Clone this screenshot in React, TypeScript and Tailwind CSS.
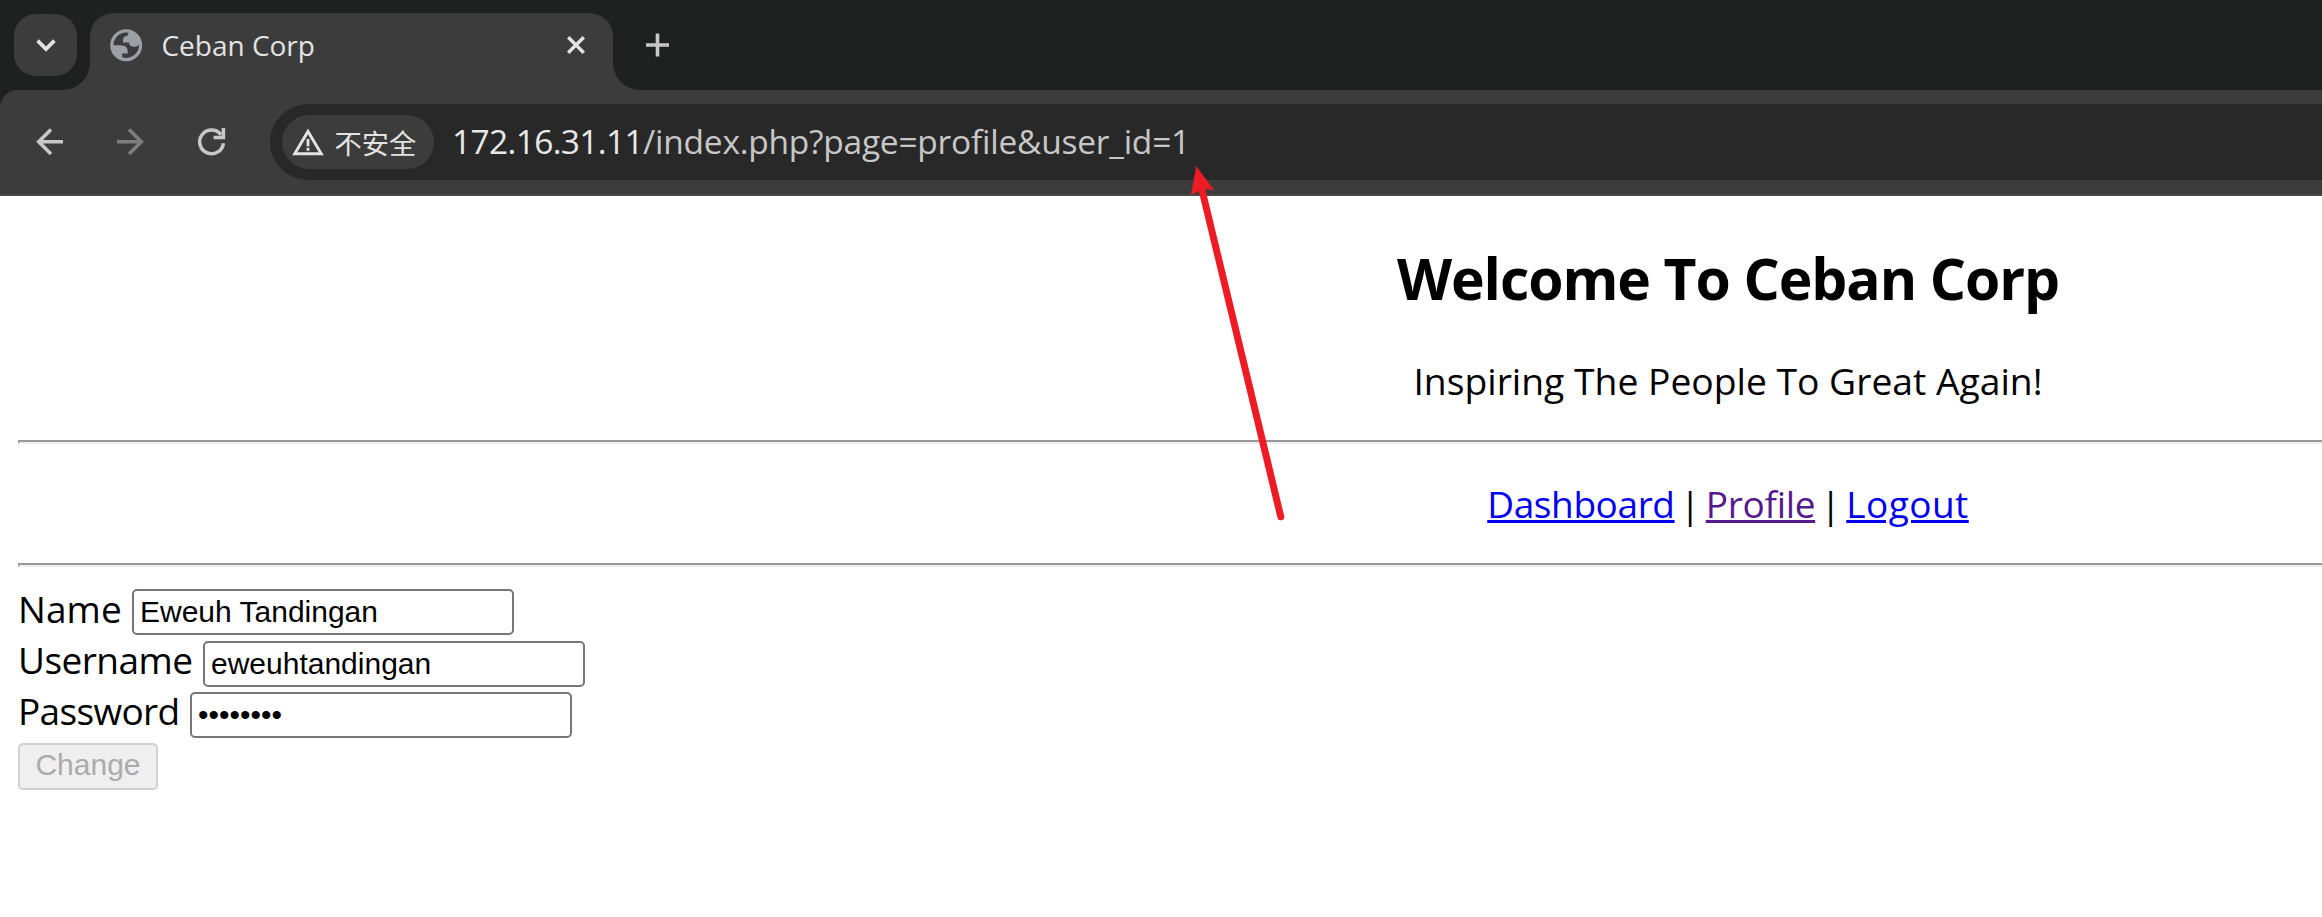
import React from "react";

function TabStrip() {
  return (
    <div className="flex h-[90px] items-start bg-[#1f2120]">
      <button className="ml-[14px] mt-[14px] flex h-[62px] w-[63px] shrink-0 items-center justify-center rounded-[22px] bg-[#3c3c3c]">
        <svg className="h-[20px] w-[24px]" viewBox="0 0 24 20" fill="none">
          <path d="M3.6 5.6 12 14l8.4-8.4" stroke="#e3e3e3" strokeWidth="3.8" />
        </svg>
      </button>
      <svg className="ml-[-14px] mt-[63px] h-[27px] w-[27px] shrink-0" viewBox="0 0 27 27">
        <path d="M27 0v27H0A27 27 0 0 0 27 0z" fill="#3c3c3c" />
      </svg>
      <div className="mt-[13px] flex h-[77px] w-[523px] shrink-0 items-start rounded-t-[23px] border-t border-[#353736] bg-[#3c3c3c]">
        <svg className="ml-[16.5px] mt-[11.8px] h-[38.4px] w-[38.4px] shrink-0" viewBox="0 0 24 24">
          <path
            fill="#9aa0a6"
            fillRule="evenodd"
            d="M12 2c5.523 0 10 4.477 10 10s-4.477 10-10 10S2 17.523 2 12 6.477 2 12 2zM4 12h4.4c3.407.022 4.922 1.73 4.543 5.127H9.488v2.47a8.004 8.004 0 0 0 10.498-8.083C19.327 12.504 18.332 13 17 13c-2.137 0-3.206-.916-3.206-2.75h-3.748c-.274-2.728.683-4.092 2.87-4.092 0-.975.327-1.597.811-1.97A8.004 8.004 0 0 0 4 12z"
          />
        </svg>
        <span className="ml-[16.5px] mt-[11px] whitespace-nowrap text-[28px] leading-[40px] text-[#e3e3e3]">
          Ceban Corp
        </span>
        <svg className="ml-auto mr-[27px] mt-[21px] h-[20px] w-[20px]" viewBox="0 0 20 20" fill="none">
          <path d="M2.2 2.2l15.6 15.6M17.8 2.2 2.2 17.8" stroke="#e3e3e3" strokeWidth="3.4" />
        </svg>
      </div>
      <svg className="mt-[63px] h-[27px] w-[27px] shrink-0" viewBox="0 0 27 27">
        <path d="M0 0v27h27A27 27 0 0 1 0 0z" fill="#3c3c3c" />
      </svg>
      <svg className="ml-[5px] mt-[33px] h-[24px] w-[24px] shrink-0" viewBox="0 0 24 24" fill="none">
        <path d="M12.5.5v23M1 12h23" stroke="#c7c7c7" strokeWidth="3.6" />
      </svg>
    </div>
  );
}

function Toolbar() {
  return (
    <div className="bg-[#1f2120]">
      <div className="flex h-[106px] items-start rounded-tl-[18px] border-b-2 border-[#484848] bg-[#3c3c3c] pt-[14px]">
        <svg className="ml-[34px] mt-[22px] h-[32px] w-[32px] shrink-0" viewBox="0 0 32 32" fill="none">
          <path d="M29 15.7H5M17 3.4 4.7 15.7 17 28" stroke="#c7c7c7" strokeWidth="3.6" />
        </svg>
        <svg className="ml-[48px] mt-[22px] h-[32px] w-[32px] shrink-0" viewBox="0 0 32 32" fill="none">
          <path d="M3 15.7h24M15 3.4l12.3 12.3L15 28" stroke="#7d7d7d" strokeWidth="3.6" />
        </svg>
        <svg className="ml-[49px] mt-[22px] h-[32px] w-[32px] shrink-0" viewBox="0 0 32 32" fill="none">
          <path
            d="M28.4 17.2A11.9 11.9 0 1 1 26 8.6M28.4 2v9.6H18.6"
            stroke="#c7c7c7"
            strokeWidth="3.5"
          />
        </svg>
        <div className="ml-[43px] flex h-[76px] grow items-center rounded-l-full bg-[#282828] pl-[11.5px]">
          <div className="flex h-[54px] w-[152.5px] shrink-0 items-center rounded-full bg-[#3c3c3c] pl-[9.5px]">
            <svg className="h-[34px] w-[34px] shrink-0" viewBox="0 0 34 34" fill="none">
              <path d="M17 6.4 30.3 28.8H3.7z" stroke="#e3e3e3" strokeWidth="2.9" />
              <path d="M17 14v7.2M17 22.8v3" stroke="#e3e3e3" strokeWidth="2.8" />
            </svg>
            <span className="ml-[9.5px] mt-[4px] whitespace-nowrap text-[27.3px] leading-[40px] text-[#e3e3e3]">
              不安全
            </span>
          </div>
          <div className="mb-[2px] ml-[18px] whitespace-nowrap text-[33.5px] leading-[46px] text-[#c7c7c7]">
            <span className="tracking-[-0.65px] text-[#e8e8e8]">172.16.31.11</span>
            <span className="tracking-[-0.24px]">/index.php?page=profile&amp;user_id=1</span>
          </div>
        </div>
      </div>
    </div>
  );
}

function Rule() {
  return <div className="h-[4px] border-b-2 border-l-2 border-t-2 border-b-[#eeeeee] border-l-[#9a9a9a] border-t-[#9a9a9a]" />;
}

const inputClass =
  "h-[46px] w-[382px] shrink-0 rounded-[5px] border-2 border-[#767676] bg-white px-[6px] font-['Liberation_Sans',Arial,sans-serif] text-[30px] leading-[38px] text-black outline-none";

function Page() {
  return (
    <div className="w-[3456px] px-[18px]">
      <h2 className="h-[137px] pt-[44px] text-center text-[57px] font-bold leading-[76px] tracking-[-1.08px]">
        Welcome To Ceban Corp
      </h2>
      <p className="h-[107px] pt-[23px] text-center text-[37.25px] leading-[50px]">
        Inspiring The People To Great Again!
      </p>
      <Rule />
      <nav className="flex h-[119px] items-start justify-center pt-[35px] text-[37px] leading-[50px] decoration-[3px] underline-offset-[2px]">
        <a className="w-[187.5px] whitespace-nowrap tracking-[-0.4px] text-[#0000ee] underline">Dashboard</a>
        <span className="w-[31px] text-center">|</span>
        <a className="w-[109.5px] whitespace-nowrap tracking-[-0.3px] text-[#551a8b] underline">Profile</a>
        <span className="w-[31px] text-center">|</span>
        <a className="w-[122.5px] whitespace-nowrap tracking-[0.45px] text-[#0000ee] underline">Logout</a>
      </nav>
      <Rule />
      <form className="flex flex-col pt-[22px] text-[37px] leading-[50px]">
        <label className="flex h-[52px] items-start">
          <span className="mt-[-5px] w-[114px] shrink-0 tracking-[0.1px]">Name</span>
          <input className={inputClass + " mt-0"} defaultValue="Eweuh Tandingan" />
        </label>
        <label className="flex h-[51px] items-start">
          <span className="mt-[-6px] w-[185px] shrink-0 tracking-[-0.55px]">Username</span>
          <input className={inputClass} defaultValue="eweuhtandingan" />
        </label>
        <label className="flex h-[51px] items-start">
          <span className="mt-[-6px] w-[172px] shrink-0 tracking-[-0.65px]">Password</span>
          <input className={inputClass} type="password" defaultValue="password" />
        </label>
        <button
          disabled
          className="h-[47px] w-[140px] rounded-[5px] border-2 border-[#d0d0d0] bg-[#efefef] text-center font-['Liberation_Sans',Arial,sans-serif] text-[30px] leading-[40px] text-[#ababab]"
        >
          <span className="block h-[43px]">Change</span>
        </button>
      </form>
    </div>
  );
}

export default function App() {
  return (
    <div className="relative h-[917px] w-[2322px] overflow-hidden bg-white font-['Open_Sans','Noto_Sans_CJK_SC',sans-serif] text-black">
      <TabStrip />
      <Toolbar />
      <Page />
      <svg className="absolute left-[1180px] top-[160px] h-[370px] w-[120px]" viewBox="1180 160 120 370" fill="none">
        <path d="M1202 190 1280.8 516.8" stroke="#ed1c24" strokeWidth="7" strokeLinecap="round" />
        <path d="M1196.2 166 1214 190 1205 189 1199.3 190.7 1191 195.3z" fill="#ed1c24" />
      </svg>
    </div>
  );
}
